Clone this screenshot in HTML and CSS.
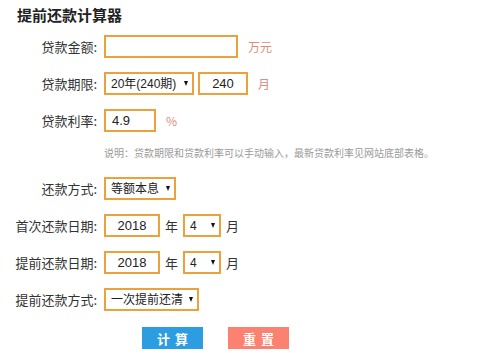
FILE: index.html
```html
<!DOCTYPE html>
<html>
<head>
  <title>提前还款计算器</title>
  <link rel="stylesheet" href="styles.css">
</head>
<body>
  <div class="calc">
    <h2 class="title">提前还款计算器</h2>
    <form class="rows">
      <div class="row">
        <label class="lbl">贷款金额:</label>
        <input class="box w-amount" type="text" value="">
        <span class="unit">万元</span>
      </div>
      <div class="row">
        <label class="lbl">贷款期限:</label>
        <div class="sel w-term">
          <select><option>20年(240期)</option></select>
        </div>
        <input class="box w-months center tight" type="text" value="240">
        <span class="unit">月</span>
      </div>
      <div class="row">
        <label class="lbl">贷款利率:</label>
        <input class="box w-rate" type="text" value="4.9">
        <span class="unit">%</span>
      </div>
      <p class="note">说明：贷款期限和贷款利率可以手动输入，最新贷款利率见网站底部表格。</p>
      <div class="row">
        <label class="lbl">还款方式:</label>
        <div class="sel w-way">
          <select><option>等额本息</option></select>
        </div>
      </div>
      <div class="row">
        <label class="lbl">首次还款日期:</label>
        <input class="box w-year center" type="text" value="2018">
        <span class="unit dark">年</span>
        <div class="sel w-month">
          <select><option>4</option></select>
        </div>
        <span class="unit dark">月</span>
      </div>
      <div class="row">
        <label class="lbl">提前还款日期:</label>
        <input class="box w-year center" type="text" value="2018">
        <span class="unit dark">年</span>
        <div class="sel w-month">
          <select><option>4</option></select>
        </div>
        <span class="unit dark">月</span>
      </div>
      <div class="row">
        <label class="lbl">提前还款方式:</label>
        <div class="sel w-pre">
          <select><option>一次提前还清</option></select>
        </div>
      </div>
      <div class="buttons">
        <button type="button" class="btn btn-calc">计算</button>
        <button type="reset" class="btn btn-reset">重置</button>
      </div>
    </form>
  </div>
</body>
</html>
```

FILE: styles.css
```css
html, body {
  margin: 0;
  background: #ffffff;
  color: #333333;
  font-family: "Noto Sans CJK SC", "Liberation Sans", sans-serif;
}
.calc {
  padding: 6px 0 0 0;
}
.title {
  margin: 0 0 11px 17px;
  font-size: 15px;
  line-height: 18px;
  font-weight: bold;
  color: #222222;
}
.rows {
  display: flex;
  flex-direction: column;
  gap: 14px;
  margin: 0;
}
.row {
  display: flex;
  align-items: center;
  height: 23px;
}
.lbl {
  width: 97px;
  margin-right: 7px;
  text-align: right;
  font-size: 13px;
  color: #333333;
}
.box {
  box-sizing: border-box;
  height: 23px;
  border: 2px solid #eba23c;
  padding: 0 6px;
  font-family: "Liberation Sans", "Noto Sans CJK SC", sans-serif;
  font-size: 13px;
  color: #222222;
  outline: none;
  background: #fff;
}
.center {
  text-align: center;
}
.tight {
  margin-left: 4px;
}
.w-amount { width: 134px; }
.w-months { width: 50px; }
.w-rate { width: 52px; }
.w-year { width: 56px; }
.unit {
  margin-left: 10px;
  font-size: 12px;
  color: #e28a7c;
}
.unit.dark {
  margin-left: 5px;
  margin-right: 5px;
  font-size: 13px;
  color: #333333;
}
.sel {
  position: relative;
  display: flex;
  height: 23px;
}
.sel select {
  appearance: none;
  -webkit-appearance: none;
  box-sizing: border-box;
  width: 100%;
  height: 23px;
  border: 2px solid #eba23c;
  border-radius: 0;
  padding: 0 12px 0 5px;
  background: #fff;
  font-family: "Liberation Sans", "Noto Sans CJK SC", sans-serif;
  font-size: 12px;
  color: #222222;
  outline: none;
}
.sel::after {
  content: "";
  position: absolute;
  right: 6px;
  top: 9px;
  border-left: 2.5px solid transparent;
  border-right: 2.5px solid transparent;
  border-top: 5px solid #111111;
  pointer-events: none;
}
.w-term { width: 90px; }
.w-way { width: 72px; }
.w-month { width: 38px; }
.w-pre { width: 95px; }
.note {
  margin: 0;
  padding: 0 0 3px 104px;
  font-size: 10px;
  line-height: 14px;
  color: #9a9a9a;
}
.buttons {
  display: flex;
  gap: 25px;
  padding-left: 142px;
  margin-top: 2px;
}
.btn {
  width: 61px;
  height: 22px;
  border: none;
  padding: 0;
  font-family: inherit;
  font-size: 13px;
  font-weight: bold;
  letter-spacing: 5px;
  text-indent: 5px;
  color: #ffffff;
  cursor: pointer;
}
.btn-calc {
  background: #2b9de0;
}
.btn-reset {
  background: #fb8270;
}
```
